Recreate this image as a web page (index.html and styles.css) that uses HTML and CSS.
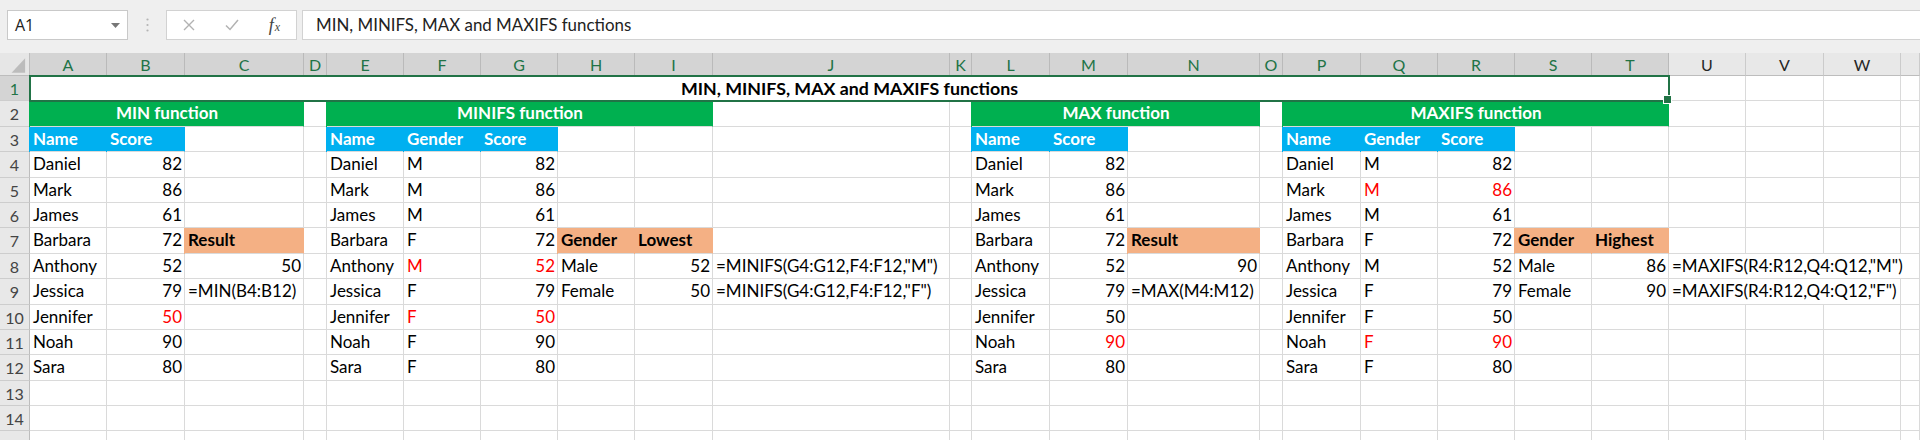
FILE: index.html
```html
<!DOCTYPE html>
<html lang="en">
<head>
<meta charset="utf-8">
<title>MIN, MINIFS, MAX and MAXIFS functions</title>
<link rel="stylesheet" href="styles.css">
</head>
<body>
<div class="fbar">
  <div class="namebox"><span>A1</span><svg class="caret" width="9" height="5" viewBox="0 0 9 5"><path d="M0 0h9L4.5 5z" fill="#777"/></svg></div>
  <div class="dots"><svg width="3" height="14" viewBox="0 0 3 14"><circle cx="1.5" cy="1.5" r="1.1" fill="#b4b4b4"/><circle cx="1.5" cy="7" r="1.1" fill="#b4b4b4"/><circle cx="1.5" cy="12.5" r="1.1" fill="#b4b4b4"/></svg></div>
  <div class="fxbox">
    <div class="fxslot"><svg width="12" height="12" viewBox="0 0 12 12"><path d="M1 1l10 10M11 1L1 11" stroke="#b2b2b2" stroke-width="1.4" fill="none"/></svg></div>
    <div class="fxslot"><svg width="14" height="12" viewBox="0 0 14 12"><path d="M1 6.5l4 4L13 1" stroke="#b2b2b2" stroke-width="1.5" fill="none"/></svg></div>
    <div class="fxslot fx"><i>f</i><span class="fxx">x</span></div>
  </div>
  <div class="formula">MIN, MINIFS, MAX and MAXIFS functions</div>
</div>

<div class="sheet">
  <!-- column headers -->
  <div class="corner"><svg width="30" height="23" viewBox="0 0 30 23"><path d="M26 5v15H12z" fill="#bcbcbc"/></svg></div>
  <div class="ch sel">A</div><div class="ch sel">B</div><div class="ch sel">C</div><div class="ch sel">D</div><div class="ch sel">E</div><div class="ch sel">F</div><div class="ch sel">G</div><div class="ch sel">H</div><div class="ch sel">I</div><div class="ch sel">J</div><div class="ch sel">K</div><div class="ch sel">L</div><div class="ch sel">M</div><div class="ch sel">N</div><div class="ch sel">O</div><div class="ch sel">P</div><div class="ch sel">Q</div><div class="ch sel">R</div><div class="ch sel">S</div><div class="ch sel">T</div><div class="ch">U</div><div class="ch">V</div><div class="ch">W</div><div class="ch"></div>

  <!-- row 1 -->
  <div class="rh sel">1</div>
  <div class="c title s20">MIN, MINIFS, MAX and MAXIFS functions</div>
  <div class="c"></div><div class="c"></div><div class="c"></div><div class="c"></div>

  <!-- row 2 -->
  <div class="rh">2</div>
  <div class="c g s3">MIN function</div><div class="c"></div>
  <div class="c g s5">MINIFS function</div><div class="c"></div><div class="c"></div>
  <div class="c g s3">MAX function</div><div class="c"></div>
  <div class="c g s5">MAXIFS function</div><div class="c"></div><div class="c"></div><div class="c"></div><div class="c"></div>

  <!-- row 3 -->
  <div class="rh">3</div>
  <div class="c bl">Name</div><div class="c bl">Score</div><div class="c"></div><div class="c"></div>
  <div class="c bl">Name</div><div class="c bl">Gender</div><div class="c bl">Score</div><div class="c"></div><div class="c"></div><div class="c"></div><div class="c"></div>
  <div class="c bl">Name</div><div class="c bl">Score</div><div class="c"></div><div class="c"></div>
  <div class="c bl">Name</div><div class="c bl">Gender</div><div class="c bl">Score</div><div class="c"></div><div class="c"></div><div class="c"></div><div class="c"></div><div class="c"></div><div class="c"></div>

  <!-- row 4 -->
  <div class="rh">4</div>
  <div class="c">Daniel</div><div class="c n">82</div><div class="c"></div><div class="c"></div>
  <div class="c">Daniel</div><div class="c">M</div><div class="c n">82</div><div class="c"></div><div class="c"></div><div class="c"></div><div class="c"></div>
  <div class="c">Daniel</div><div class="c n">82</div><div class="c"></div><div class="c"></div>
  <div class="c">Daniel</div><div class="c">M</div><div class="c n">82</div><div class="c"></div><div class="c"></div><div class="c"></div><div class="c"></div><div class="c"></div><div class="c"></div>

  <!-- row 5 -->
  <div class="rh">5</div>
  <div class="c">Mark</div><div class="c n">86</div><div class="c"></div><div class="c"></div>
  <div class="c">Mark</div><div class="c">M</div><div class="c n">86</div><div class="c"></div><div class="c"></div><div class="c"></div><div class="c"></div>
  <div class="c">Mark</div><div class="c n">86</div><div class="c"></div><div class="c"></div>
  <div class="c">Mark</div><div class="c red">M</div><div class="c n red">86</div><div class="c"></div><div class="c"></div><div class="c"></div><div class="c"></div><div class="c"></div><div class="c"></div>

  <!-- row 6 -->
  <div class="rh">6</div>
  <div class="c">James</div><div class="c n">61</div><div class="c"></div><div class="c"></div>
  <div class="c">James</div><div class="c">M</div><div class="c n">61</div><div class="c"></div><div class="c"></div><div class="c"></div><div class="c"></div>
  <div class="c">James</div><div class="c n">61</div><div class="c"></div><div class="c"></div>
  <div class="c">James</div><div class="c">M</div><div class="c n">61</div><div class="c"></div><div class="c"></div><div class="c"></div><div class="c"></div><div class="c"></div><div class="c"></div>

  <!-- row 7 -->
  <div class="rh">7</div>
  <div class="c">Barbara</div><div class="c n">72</div><div class="c o">Result</div><div class="c"></div>
  <div class="c">Barbara</div><div class="c">F</div><div class="c n">72</div><div class="c o">Gender</div><div class="c o">Lowest</div><div class="c"></div><div class="c"></div>
  <div class="c">Barbara</div><div class="c n">72</div><div class="c o">Result</div><div class="c"></div>
  <div class="c">Barbara</div><div class="c">F</div><div class="c n">72</div><div class="c o">Gender</div><div class="c o">Highest</div><div class="c"></div><div class="c"></div><div class="c"></div><div class="c"></div>

  <!-- row 8 -->
  <div class="rh">8</div>
  <div class="c">Anthony</div><div class="c n">52</div><div class="c n">50</div><div class="c"></div>
  <div class="c">Anthony</div><div class="c red">M</div><div class="c n red">52</div><div class="c">Male</div><div class="c n">52</div><div class="c">=MINIFS(G4:G12,F4:F12,"M")</div><div class="c"></div>
  <div class="c">Anthony</div><div class="c n">52</div><div class="c n">90</div><div class="c"></div>
  <div class="c">Anthony</div><div class="c">M</div><div class="c n">52</div><div class="c">Male</div><div class="c n">86</div><div class="c s4">=MAXIFS(R4:R12,Q4:Q12,"M")</div>

  <!-- row 9 -->
  <div class="rh">9</div>
  <div class="c">Jessica</div><div class="c n">79</div><div class="c">=MIN(B4:B12)</div><div class="c"></div>
  <div class="c">Jessica</div><div class="c">F</div><div class="c n">79</div><div class="c">Female</div><div class="c n">50</div><div class="c">=MINIFS(G4:G12,F4:F12,"F")</div><div class="c"></div>
  <div class="c">Jessica</div><div class="c n">79</div><div class="c">=MAX(M4:M12)</div><div class="c"></div>
  <div class="c">Jessica</div><div class="c">F</div><div class="c n">79</div><div class="c">Female</div><div class="c n">90</div><div class="c s3">=MAXIFS(R4:R12,Q4:Q12,"F")</div><div class="c"></div>

  <!-- row 10 -->
  <div class="rh">10</div>
  <div class="c">Jennifer</div><div class="c n red">50</div><div class="c"></div><div class="c"></div>
  <div class="c">Jennifer</div><div class="c red">F</div><div class="c n red">50</div><div class="c"></div><div class="c"></div><div class="c"></div><div class="c"></div>
  <div class="c">Jennifer</div><div class="c n">50</div><div class="c"></div><div class="c"></div>
  <div class="c">Jennifer</div><div class="c">F</div><div class="c n">50</div><div class="c"></div><div class="c"></div><div class="c"></div><div class="c"></div><div class="c"></div><div class="c"></div>

  <!-- row 11 -->
  <div class="rh">11</div>
  <div class="c">Noah</div><div class="c n">90</div><div class="c"></div><div class="c"></div>
  <div class="c">Noah</div><div class="c">F</div><div class="c n">90</div><div class="c"></div><div class="c"></div><div class="c"></div><div class="c"></div>
  <div class="c">Noah</div><div class="c n red">90</div><div class="c"></div><div class="c"></div>
  <div class="c">Noah</div><div class="c red">F</div><div class="c n red">90</div><div class="c"></div><div class="c"></div><div class="c"></div><div class="c"></div><div class="c"></div><div class="c"></div>

  <!-- row 12 -->
  <div class="rh">12</div>
  <div class="c">Sara</div><div class="c n">80</div><div class="c"></div><div class="c"></div>
  <div class="c">Sara</div><div class="c">F</div><div class="c n">80</div><div class="c"></div><div class="c"></div><div class="c"></div><div class="c"></div>
  <div class="c">Sara</div><div class="c n">80</div><div class="c"></div><div class="c"></div>
  <div class="c">Sara</div><div class="c">F</div><div class="c n">80</div><div class="c"></div><div class="c"></div><div class="c"></div><div class="c"></div><div class="c"></div><div class="c"></div>

  <!-- row 13 -->
  <div class="rh">13</div>
  <div class="c"></div><div class="c"></div><div class="c"></div><div class="c"></div><div class="c"></div><div class="c"></div><div class="c"></div><div class="c"></div><div class="c"></div><div class="c"></div><div class="c"></div><div class="c"></div><div class="c"></div><div class="c"></div><div class="c"></div><div class="c"></div><div class="c"></div><div class="c"></div><div class="c"></div><div class="c"></div><div class="c"></div><div class="c"></div><div class="c"></div><div class="c"></div>

  <!-- row 14 -->
  <div class="rh">14</div>
  <div class="c"></div><div class="c"></div><div class="c"></div><div class="c"></div><div class="c"></div><div class="c"></div><div class="c"></div><div class="c"></div><div class="c"></div><div class="c"></div><div class="c"></div><div class="c"></div><div class="c"></div><div class="c"></div><div class="c"></div><div class="c"></div><div class="c"></div><div class="c"></div><div class="c"></div><div class="c"></div><div class="c"></div><div class="c"></div><div class="c"></div><div class="c"></div>

  <!-- row 15 (only its top edge is visible) -->
  <div class="rh"></div>
  <div class="c"></div><div class="c"></div><div class="c"></div><div class="c"></div><div class="c"></div><div class="c"></div><div class="c"></div><div class="c"></div><div class="c"></div><div class="c"></div><div class="c"></div><div class="c"></div><div class="c"></div><div class="c"></div><div class="c"></div><div class="c"></div><div class="c"></div><div class="c"></div><div class="c"></div><div class="c"></div><div class="c"></div><div class="c"></div><div class="c"></div><div class="c"></div>
</div>
</body>
</html>
```

FILE: styles.css
```css
* { box-sizing: border-box; margin: 0; padding: 0; }
html, body { width: 1920px; height: 440px; overflow: hidden; background: #fff; }
body { font-family: Lato, "Liberation Sans", sans-serif; color: #000; }

/* formula bar */
.fbar {
  height: 53px;
  background: #efefef;
  display: flex;
  align-items: flex-start;
  padding: 10px 0 0 7px;
}
.namebox {
  width: 121px;
  height: 30px;
  background: #fff;
  border: 1px solid #c9c9c9;
  display: flex;
  align-items: center;
  justify-content: space-between;
  padding: 0 7px 0 7px;
  font-family: "Open Sans", "Noto Sans", sans-serif;
  font-size: 16px;
  color: #222;
}
.dots {
  width: 38px;
  height: 30px;
  display: flex;
  align-items: center;
  justify-content: center;
}
.fxbox {
  width: 131px;
  height: 30px;
  background: #fff;
  border: 1px solid #d2d2d2;
  display: flex;
  align-items: center;
}
.fxslot {
  width: 43px;
  height: 28px;
  display: flex;
  align-items: center;
  justify-content: center;
}
.fx {
  font-family: "Liberation Serif", "DejaVu Serif", serif;
  color: #444;
  font-size: 18px;
}
.fx i { font-style: italic; }
.fxx { font-style: italic; font-size: 12px; margin-top: 5px; margin-left: 1px; }
.formula {
  flex: 1;
  margin-left: 5px;
  height: 30px;
  background: #fff;
  border: 1px solid #d2d2d2;
  border-right: none;
  padding-left: 13px;
  font-size: 16.9px;
  line-height: 28px;
  color: #222;
  white-space: nowrap;
}

/* sheet grid */
.sheet {
  display: grid;
  grid-template-columns: 30px 77px 78px 119px 23px 77px 77px 77px 77px 78px 237px 22px 78px 78px 132px 23px 78px 77px 77px 77px 77px 77px 78px 77px 19px;
  grid-template-rows: 23px repeat(15, 25.4px);
  height: 387px;
  overflow: hidden;
  font-size: 17px;
}
.corner {
  background: #e6e6e6;
  border-right: 1px solid #bdbdbd;
  border-bottom: 1px solid #bdbdbd;
  display: flex;
}
.ch {
  background: #e8e8e8;
  border-right: 1px solid #cbcbcb;
  border-bottom: 1px solid #bdbdbd;
  text-align: center;
  font-size: 16px;
  line-height: 24px;
  color: #262626;
}
.ch.sel {
  background: #d4d4d4;
  color: #217346;
  border-right-color: #bababa;
}
.rh {
  background: #e8e8e8;
  border-right: 1px solid #bdbdbd;
  border-bottom: 1px solid #cdcdcd;
  text-align: center;
  font-size: 16px;
  line-height: 25px;
  color: #444;
}
.rh.sel {
  background: #d4d4d4;
  color: #217346;
}

.c {
  border-right: 1px solid #dadada;
  border-bottom: 1px solid #dadada;
  padding: 0 2px 0 3px;
  line-height: 24.4px;
  white-space: nowrap;
  overflow: visible;
}
.n { text-align: right; }
.red { color: #ff0000; }
.s3 { grid-column: span 3; }
.s4 { grid-column: span 4; }
.s5 { grid-column: span 5; }
.s20 { grid-column: span 20; }

.title {
  position: relative;
  font-weight: 700;
  font-size: 17.8px;
  text-align: center;
  outline: 2px solid #217346;
  outline-offset: -1px;
}
.title::after {
  content: "";
  position: absolute;
  right: -4px;
  bottom: -4px;
  width: 7px;
  height: 7px;
  background: #217346;
  border: 1px solid #fff;
}
.g {
  background: #00b050;
  color: #fff;
  font-weight: 700;
  text-align: center;
  border-right-color: #00b050;
  box-shadow: -1px 0 0 #00b050;
}
.bl {
  background: #00b0f0;
  color: #fff;
  font-weight: 700;
  border-right-color: #00b0f0;
  box-shadow: -1px 0 0 #00b0f0;
}
.o {
  background: #f4b084;
  font-weight: 700;
  border-right-color: #f4b084;
  box-shadow: -1px 0 0 #f4b084;
}
```
